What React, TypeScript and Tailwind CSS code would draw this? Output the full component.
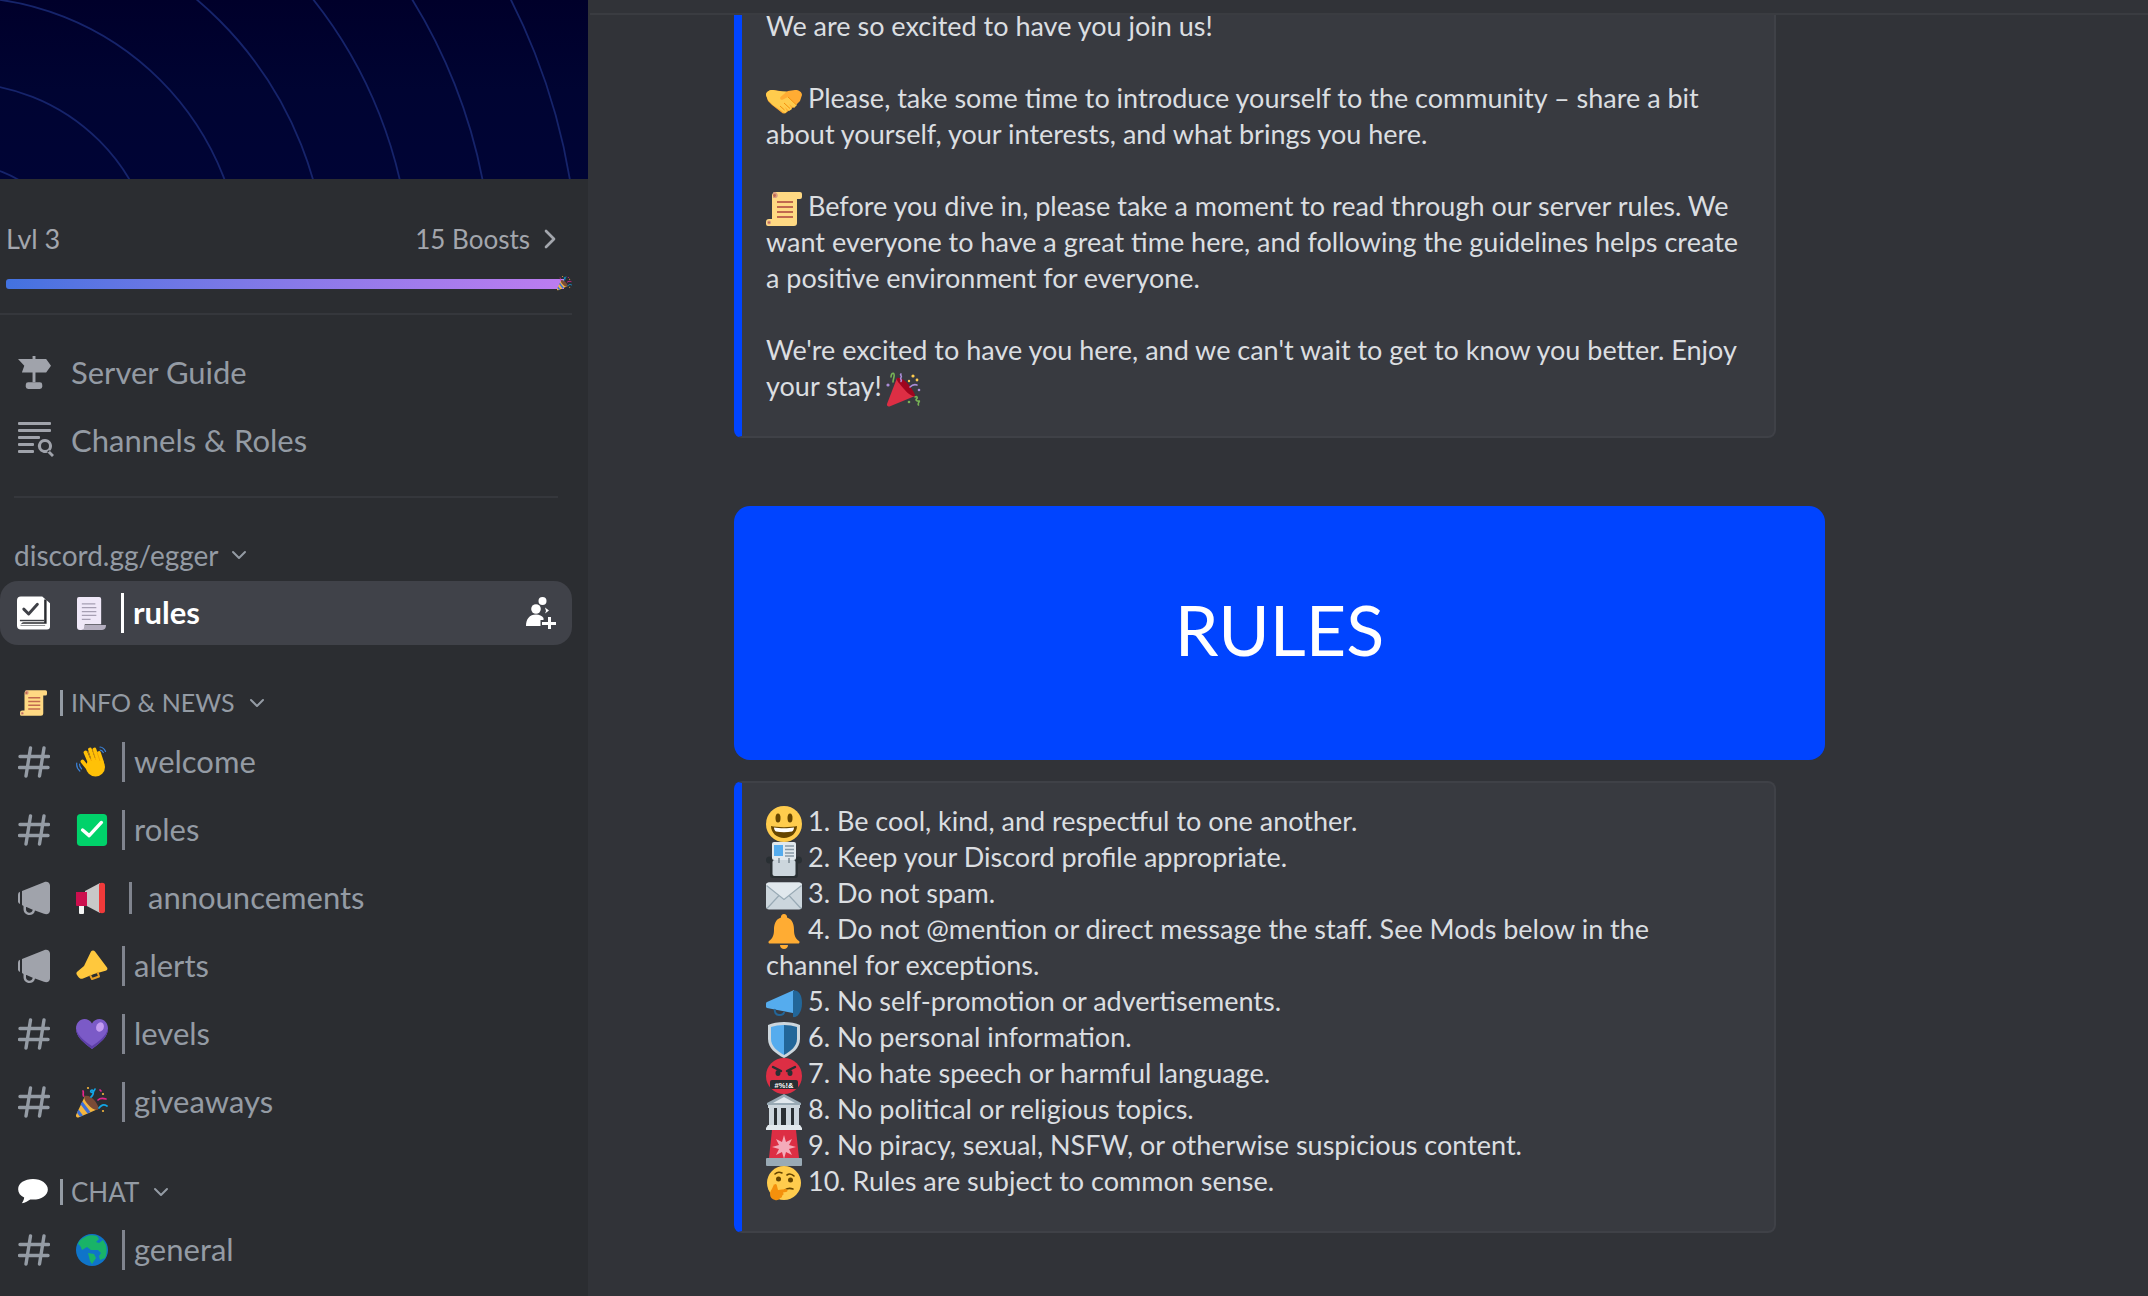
import React from "react";
import { ChevronDown, ChevronRight } from "lucide-react";

type IconProps = { className?: string };

// ---- sidebar glyphs ----
const HashIcon = ({ className }: IconProps) => (
  <svg viewBox="0 0 32 32" className={className} fill="none" stroke="#949ba4" strokeWidth="3.4" strokeLinecap="round">
    <path d="M12.5 2 8 30M26 2l-4.500 28M2 10.500h28.500M1.500 21.500H30" />
  </svg>
);

const AnnounceIcon = ({ className }: IconProps) => (
  <svg viewBox="0 0 32 34" className={className} fill="#a0a3ab">
    <path d="M0 13.500a3 3 0 0 1 2-2.800V23a3 3 0 0 1-2-2.800z" />
    <path d="M4 10 26 1.200C29 0 32 1.500 32 4.500v25c0 3-3 4.500-6 3.300l-9-3.400c-.5 3-3 4.600-5.500 4.600-3.500 0-6-2.500-6-6V25L4 24zM8 26v2.500c0 2 1.500 3.200 3.400 3.200 1.700 0 3-1 3.300-3L8.500 26z" fillRule="evenodd" />
  </svg>
);

const SignIcon = ({ className }: IconProps) => (
  <svg viewBox="0 0 34 34" className={className} fill="#a0a3ab">
    <path d="M15 0h3v3h11l5 7-5 7H18v10h-3V17H4l2.500-7L0 3h15z" />
    <rect x="8" y="27" width="17" height="7" rx="2.500" />
  </svg>
);

const ListSearchIcon = ({ className }: IconProps) => (
  <svg viewBox="0 0 36 36" className={className} fill="#a0a3ab">
    <rect x="0" y="0" width="33" height="3" rx="1" />
    <rect x="0" y="7" width="33" height="3" rx="1" />
    <rect x="0" y="14" width="22" height="3" rx="1" />
    <rect x="0" y="21" width="16" height="3" rx="1" />
    <rect x="0" y="28" width="16" height="3" rx="1" />
    <path d="M27 17a7 7 0 1 1-4.200 12.600l-.2-.1A7 7 0 0 1 27 17zm0 3a4 4 0 1 0 0 8 4 4 0 0 0 0-8zM31 28l5 5-2 2-5-5z" fillRule="evenodd" />
  </svg>
);

const RulesBookIcon = ({ className }: IconProps) => (
  <svg viewBox="0 0 34 34" className={className}>
    <path fill="#fff" d="M4 0h22l8 7v24a3 3 0 0 1-3 3H4a4 4 0 0 1-4-4V4a4 4 0 0 1 4-4z" />
    <path fill="#2b2d31" d="M28 3h2.500v25H6a2.500 2.500 0 0 0-2.500 2h25.500v.5H4c0-2.500 1-4 3-4h21z" />
    <path fill="none" stroke="#3f4147" strokeWidth="3" strokeLinecap="round" strokeLinejoin="round" d="M7 13l5 5 9-10" />
    <path fill="#3f4147" d="M3 24h25v1.500H3z" />
  </svg>
);

const AddPeopleIcon = ({ className }: IconProps) => (
  <svg viewBox="0 0 30 32" className={className} fill="#fff">
    <circle cx="16.500" cy="4" r="4" />
    <circle cx="10" cy="12" r="4.800" />
    <path d="M19 10.500l4 3-4 3a6 6 0 0 0 0-6z" />
    <path d="M0 29c0-7 3.500-11.500 10-11.500 3.500 0 6 1.300 7.500 3.500v2h-3v6H0z" />
    <path d="M22 20h3v5h5v3h-5v4h-3v-4h-6v-3h6z" />
  </svg>
);

// ---- emoji, drawn by hand since no emoji font is installed ----
const ScrollEmoji = ({ className }: IconProps) => (
  <svg viewBox="0 0 36 36" className={className}>
    <path fill="#FFD983" d="M6 5a4 4 0 0 1 4-4h24a2 2 0 0 1 2 2v3a2 2 0 0 1-2 2h-3v24a3 3 0 0 1-3 3H2a2 2 0 0 1-2-2v-2a3 3 0 0 1 3-3h3z" />
    <path fill="#D99E82" d="M7 1.500A3 3 0 0 1 10 7H7z" />
    <path fill="#C1694F" d="M11 10h16v2H11zM11 15h16v2H11zM11 20h16v2H11zM11 25h16v2H11z" />
    <circle cx="3" cy="31.500" r="2" fill="#D99E82" />
    <circle cx="8.500" cy="4.500" r="1.400" fill="#C1694F" />
    <circle cx="3" cy="31.500" r="1" fill="#C1694F" />
  </svg>
);

const HandshakeEmoji = ({ className }: IconProps) => (
  <svg viewBox="0 0 36 36" className={className}>
    <path fill="#FFAC33" d="M0 12c0-3 3-5 7-5l7 1 4 2 4-2 7-1c4 0 7 2 7 5l-2 6-4 4-9 7c-2 2-4 2-6 0l-9-7-4-4z" />
    <path fill="#FFCC4D" d="M12 8l9 .5-6 5c-2 2 0 4 2 3l5-2.500 9 8-3 3-5-4 3 5-3 2-4-4 2 4.500-2 1.500-12-8-5-5L0 12c0-3 3-5 7-5z" />
    <path fill="none" stroke="#F4900C" strokeWidth="1" d="M22 14l8 7.500M18 20l6 5.500M14 23l4.500 4" />
  </svg>
);

const PartyEmoji = ({ className }: IconProps) => (
  <svg viewBox="0 0 36 36" className={className}>
    <path fill="#DD2E44" d="M11 7 1 33c-.5 1.500 1 3 2.500 2.400L29 25z" />
    <path fill="#A0041E" d="M11 7c3-1 8 2 12 7s6.500 10 6 11c-2 1-7-2-11-7S9.500 9 11 7z" />
    <path fill="none" stroke="#AA8DD8" strokeWidth="1.600" strokeLinecap="round" d="M15 3c-1.500 1 1.500 2 0 3.500S16.500 9 15 10.500M31 14c-3-1-5 0-7 2" />
    <path fill="none" stroke="#77B255" strokeWidth="1.600" strokeLinecap="round" d="M5 6c0-3 2-5 3-3s-1 5-1 8M29 26c2-1 3 1 1.500 2s1 2.500 2.500 2-2 3-.5 4" />
    <circle cx="27" cy="5" r="1.600" fill="#FFCC4D" />
    <circle cx="31" cy="9" r="1.400" fill="#FFCC4D" />
    <circle cx="23" cy="10" r="1.200" fill="#FFCC4D" />
    <circle cx="2" cy="14" r="1.600" fill="#AA8DD8" />
    <circle cx="33" cy="19" r="1.300" fill="#AA8DD8" />
    <circle cx="23" cy="31" r="1.300" fill="#77B255" />
  </svg>
);

const PopperEmoji = ({ className }: IconProps) => (
  <svg viewBox="0 0 32 32" className={className}>
    <path fill="#F4B63F" d="M9 10 0 29c-.5 1.500 1 3 2.500 2.500L22 23z" />
    <path fill="#3B6FD8" d="M6.500 15.500 14.500 26l-3 1.500-7-9.200zM2.500 23.500l4.500 6-3 1.300-3-4z" />
    <path fill="#7A4B36" d="M9 10c2.500-1 7 1 10 5s4.500 7.500 3 8.500c-2 1.500-6.500-1-10-5S7.500 12 9 10z" />
    <path fill="none" stroke="#E5258C" strokeWidth="1.700" strokeLinecap="round" d="M7 5c1 1.500-.5 2.500.5 5M22 14c2-2 5-2 8-1M24 4l1 1" />
    <path fill="none" stroke="#12A5E6" strokeWidth="1.700" strokeLinecap="round" d="M19 3c-1 3-3 4-4 3s1-3 2-1-.5 5-2 6M23 22c2-3 5-4 8-2" />
    <circle cx="12" cy="2" r="1.100" fill="#F4B63F" />
    <circle cx="27" cy="8" r="1.100" fill="#F4B63F" />
    <circle cx="27" cy="25" r="1.100" fill="#F4B63F" />
  </svg>
);

const WaveEmoji = ({ className }: IconProps) => (
  <svg viewBox="0 0 32 32" className={className}>
    <circle cx="19.500" cy="21" r="9.500" fill="#FFC107" />
    <path fill="none" stroke="#FFC107" strokeWidth="3.800" strokeLinecap="round" d="M12.500 23 6.500 15.500M13.500 16 9.500 6.500M17.500 14 14 3.500M22 14l-3.500-10.500M26 16 23 7" />
    <path fill="none" stroke="#F29F05" strokeWidth=".8" d="M15.500 15 11.800 5M19.800 14 16.500 3.500M24 15l-3-9" />
    <path fill="none" stroke="#3B82D8" strokeWidth="1.200" strokeLinecap="round" d="M.8 17c-.5 3 .8 6 3 8M3.500 18c0 2 .5 3.500 2 4.800M24 1c2.500.2 4.500 2 5.500 4.500M24 4c1.500.2 2.500 1 3.300 2.500" />
  </svg>
);

const CheckEmoji = ({ className }: IconProps) => (
  <svg viewBox="0 0 32 34" className={className}>
    <rect x="0" y="0" width="32" height="34" rx="4" fill="#00D26A" />
    <path fill="none" stroke="#fff" strokeWidth="3.600" strokeLinecap="round" strokeLinejoin="round" d="M6 17l7 6 13-14" />
  </svg>
);

const RedMegaphoneEmoji = ({ className }: IconProps) => (
  <svg viewBox="0 0 32 32" className={className}>
    <path fill="#C8C8C8" d="M9 9 24 1v30L9 23z" />
    <path fill="#CC0F4E" d="M0 10h11v14H1a1 1 0 0 1-1-1z" />
    <path fill="#F4F4F4" d="M3 24h5v7a1 1 0 0 1-1 1H4a1 1 0 0 1-1-1z" />
    <path fill="#F03A3A" d="M23 3c0-3 6-3 6 0v26c0 3-6 3-6 0z" />
  </svg>
);

const HornEmoji = ({ className }: IconProps) => (
  <svg viewBox="0 0 32 32" className={className}>
    <path fill="#FFC83D" d="M15 1.500c1-1.500 3-1.500 4 0l12 16c1 1.500 0 3-1.500 3.200L18 24 7 28.500c-2 1-3.500-.3-5-2s-2.300-3.500-.8-4.800L8 16z" />
    <path fill="none" stroke="#E8A025" strokeWidth="2" strokeLinejoin="round" d="M14 25l2 4 7-2.500-1.500-4.500" />
  </svg>
);

const HeartEmoji = ({ className }: IconProps) => (
  <svg viewBox="0 0 32 32" className={className}>
    <path fill="#7B5AC7" d="M16 31C8 25 0 19 0 10.500 0 5 4 1 8.500 1c3 0 6 1.500 7.500 4.500C17.500 2.500 20.500 1 23.500 1 28 1 32 5 32 10.500 32 19 24 25 16 31z" />
    <path fill="#5D3FA6" d="M16 31C8 25 0 19 0 10.500c2 8 9 13 16 17.500 7-4.500 14-9.500 16-17.500C32 19 24 25 16 31z" />
    <ellipse cx="24" cy="9" rx="3.800" ry="4.800" fill="#C39BF0" transform="rotate(20 24 9)" />
  </svg>
);

const GlobeEmoji = ({ className }: IconProps) => (
  <svg viewBox="0 0 32 32" className={className}>
    <circle cx="16" cy="16" r="16" fill="#0F74C9" />
    <path fill="#19B368" d="M10 2.500c3-1.500 8-1.500 11-.5l2 3-3 3 3 1 4-3 3 5c1 4 1 9-1 13l-5 2-1-4 2-3-3-3-7 0-4-3-5 3c-1-3-2-5-4-6 1-3 3-5 8-7.500z" />
    <path fill="#19B368" d="M12 19l6 1 2 4-4 6-2-3z" />
  </svg>
);

const SpeechEmoji = ({ className }: IconProps) => (
  <svg viewBox="0 0 32 28" className={className}>
    <path fill="#fff" d="M16 0C7 0 0 4.500 0 11c0 4 2.500 7 6.500 9-.2 2-1 4-2.500 6 3.500-.5 7-2.500 9-4 1 .2 2 .2 3 .2 9 0 16-5 16-11S25 0 16 0z" />
  </svg>
);

const PaperEmoji = ({ className }: IconProps) => (
  <svg viewBox="0 0 30 34" className={className}>
    <path fill="#EFE8F8" d="M2 0h21a2 2 0 0 1 2 2v26H8v3a3 3 0 0 1-3 3H3a3 3 0 0 1-3-3V2a2 2 0 0 1 2-2z" />
    <path fill="#B4AEBF" d="M4 34c3 0 4-2 4-5h22c0 3-1 5-4 5z" />
    <path stroke="#A69FB3" strokeWidth="1.300" d="M5 7h14M5 11h15M5 15h15M5 19h15M5 23h9" />
  </svg>
);

const SmileEmoji = ({ className }: IconProps) => (
  <svg viewBox="0 0 36 36" className={className}>
    <circle cx="18" cy="18" r="18" fill="#FFCC4D" />
    <ellipse cx="12" cy="12" rx="2.500" ry="4.500" fill="#664500" />
    <ellipse cx="24" cy="12" rx="2.500" ry="4.500" fill="#664500" />
    <path fill="#664500" d="M5 20c5 1.500 21 1.500 26 0 0 7-6 12-13 12S5 27 5 20z" />
    <path fill="#fff" d="M8 21.500c5 1 15 1 20 0 0 2-1 3.500-2 4-5 1-11 1-16 0-1-.5-2-2-2-4z" />
  </svg>
);

const BadgeEmoji = ({ className }: IconProps) => (
  <svg viewBox="0 0 36 36" className={className}>
    <circle cx="3.500" cy="18" r="3.500" fill="#292F33" />
    <circle cx="32.500" cy="18" r="3.500" fill="#292F33" />
    <rect x="4" y="16" width="28" height="20" rx="3" fill="#292F33" />
    <rect x="6.500" y="18" width="23" height="16" rx="2" fill="#CCD6DD" />
    <rect x="6" y="0" width="24" height="18" rx="2" fill="#E1E8ED" />
    <rect x="8" y="3" width="9" height="11" fill="#55ACEE" />
    <path stroke="#8899A6" strokeWidth="1.300" d="M19 4h9M19 7.500h9M19 11h9M19 14h9" />
    <path stroke="#66757F" strokeWidth="1.200" d="M13 16v5M23 16v5" />
  </svg>
);

const MailEmoji = ({ className }: IconProps) => (
  <svg viewBox="0 0 36 27" className={className}>
    <rect width="36" height="27" rx="3" fill="#CCD6DD" />
    <path fill="#E1E8ED" d="M3 0h30a3 3 0 0 1 3 3L18 17 0 3a3 3 0 0 1 3-3z" />
    <path fill="none" stroke="#99AAB5" strokeWidth="1.200" d="M.5 3 18 17 35.500 3M1 26l12-13M35 26 23 13" />
  </svg>
);

const BellEmoji = ({ className }: IconProps) => (
  <svg viewBox="0 0 36 36" className={className}>
    <path fill="#FFAC33" d="M18 0a3 3 0 0 1 3 3.500C27 5.500 28 11 28 16c0 6 2 9 5 11 1 1 .5 2.500-1 2.500H4c-1.500 0-2-1.500-1-2.500 3-2 5-5 5-11 0-5 1-10.500 7-12.500A3 3 0 0 1 18 0z" />
    <path fill="#FFAC33" d="M14 31h8c0 2.500-2 4-4 4s-4-1.500-4-4z" />
  </svg>
);

const BlueHornEmoji = ({ className }: IconProps) => (
  <svg viewBox="0 0 36 30" className={className}>
    <path fill="#55ACEE" d="M1 13 28 1l4 24-31-6a2 2 0 0 1-1-1.500v-3A2 2 0 0 1 1 13z" />
    <path fill="#226699" d="M27 2c3-2 9 1 9 12s-6 15-9 14z" />
    <path fill="none" stroke="#226699" strokeWidth="2" d="M9 20c-1 3 1 6 4 6s5-1 5-3" />
  </svg>
);

const ShieldEmoji = ({ className }: IconProps) => (
  <svg viewBox="0 0 36 36" className={className}>
    <path fill="#CCD6DD" d="M18 0c6 0 12 1 16 3v14c0 9-8 15-16 19C10 32 2 26 2 17V3c4-2 10-3 16-3z" />
    <path fill="#55ACEE" d="M18 3c-5 0-9 .8-13 2v12c0 7 6 12 13 16z" />
    <path fill="#226699" d="M18 3c5 0 9 .8 13 2v12c0 7-6 12-13 16z" />
  </svg>
);

const CursingEmoji = ({ className }: IconProps) => (
  <svg viewBox="0 0 36 36" className={className}>
    <circle cx="18" cy="18" r="18" fill="#DD2E44" />
    <path fill="none" stroke="#292F33" strokeWidth="2.400" strokeLinecap="round" d="M7 9l8 4M29 9l-8 4" />
    <ellipse cx="12" cy="15" rx="2.500" ry="3" fill="#292F33" />
    <ellipse cx="24" cy="15" rx="2.500" ry="3" fill="#292F33" />
    <rect x="4" y="22" width="28" height="9" rx="2" fill="#292F33" />
    <text x="18" y="29.500" textAnchor="middle" fill="#fff" fontSize="7.500" fontWeight="700" fontFamily="Liberation Sans, sans-serif">#%!&amp;</text>
  </svg>
);

const BankEmoji = ({ className }: IconProps) => (
  <svg viewBox="0 0 36 36" className={className}>
    <path fill="#99AAB5" d="M18 0 35 9v2H1V9z" />
    <path fill="#E1E8ED" d="M18 3 29 9H7z" />
    <rect x="2" y="11" width="32" height="3" fill="#CCD6DD" />
    <rect x="3" y="14" width="30" height="17" fill="#292F33" />
    <path fill="#CCD6DD" d="M3 14h5v17H3zM11 14h4v17h-4zM20 14h5v17h-5zM28 14h5v17h-5z" />
    <path fill="#E1E8ED" d="M2 31h32l2 3v2H0v-2z" />
  </svg>
);

const SirenEmoji = ({ className }: IconProps) => (
  <svg viewBox="0 0 36 36" className={className}>
    <path fill="#DD2E44" d="M6 0h24l3 28H3z" />
    <path fill="#F4ABBA" d="m18 5 2 7 6-3-3 6 7 2-7 2 3 6-6-3-2 7-2-7-6 3 3-6-7-2 7-2-3-6 6 3z" />
    <rect y="28" width="36" height="8" rx="1" fill="#99AAB5" />
  </svg>
);

const ThinkingEmoji = ({ className }: IconProps) => (
  <svg viewBox="0 0 36 36" className={className}>
    <circle cx="18" cy="17" r="17" fill="#FFCC4D" />
    <path fill="none" stroke="#664500" strokeWidth="1.600" strokeLinecap="round" d="M9 8c2-2 5-2 7-1M21 9c2-1.500 5-1 7 1M19 24c2-1.500 5-2 8-1" />
    <circle cx="12.500" cy="13" r="2.500" fill="#664500" />
    <circle cx="24.500" cy="14" r="2.500" fill="#664500" />
    <path fill="#F4900C" d="M8 19c1-2 3-1 3 1l1 4 8-1c2 0 2 3 0 3l-3 .5c1 1 .5 3-1 3 .5 1.500-1 3-2 2.500-1 2-3 2.500-5 2-3-.5-5-3-5-6 0-3 3-6 4-10z" />
  </svg>
);

const emoji = "inline-block w-9 h-9 -my-2 align-middle mr-[6px]";

type Channel = { name: string; kind: "text" | "news"; Emoji: React.FC<IconProps>; spaced?: boolean };

const infoChannels: Channel[] = [
  { name: "welcome", kind: "text", Emoji: WaveEmoji },
  { name: "roles", kind: "text", Emoji: CheckEmoji },
  { name: "announcements", kind: "news", Emoji: RedMegaphoneEmoji, spaced: true },
  { name: "alerts", kind: "news", Emoji: HornEmoji },
  { name: "levels", kind: "text", Emoji: HeartEmoji },
  { name: "giveaways", kind: "text", Emoji: PopperEmoji },
];

const ChannelRow = ({ name, kind, Emoji, spaced }: Channel) => (
  <div className="flex items-center h-[68px] pl-[18px] text-[31px] text-[#949ba4]">
    {kind === "text" ? <HashIcon className="w-8 h-8 shrink-0" /> : <AnnounceIcon className="w-8 h-[34px] shrink-0" />}
    <Emoji className="w-8 h-8 ml-[26px] shrink-0" />
    <span className={spaced ? "w-[3px] h-[32px] bg-[#80848e] ml-[21px] mr-[16px]" : "w-[3px] h-[40px] bg-[#80848e] ml-[14px] mr-[9px]"} />
    <span className="leading-none -mt-[2px]">{name}</span>
  </div>
);

const rules: { Emoji: React.FC<IconProps>; text: string }[] = [
  { Emoji: SmileEmoji, text: "1. Be cool, kind, and respectful to one another." },
  { Emoji: BadgeEmoji, text: "2. Keep your Discord profile appropriate." },
  { Emoji: MailEmoji, text: "3. Do not spam." },
  { Emoji: BellEmoji, text: "4. Do not @mention or direct message the staff. See Mods below in the" },
  { Emoji: BlueHornEmoji, text: "5. No self-promotion or advertisements." },
  { Emoji: ShieldEmoji, text: "6. No personal information." },
  { Emoji: CursingEmoji, text: "7. No hate speech or harmful language." },
  { Emoji: BankEmoji, text: "8. No political or religious topics." },
  { Emoji: SirenEmoji, text: "9. No piracy, sexual, NSFW, or otherwise suspicious content." },
  { Emoji: ThinkingEmoji, text: "10. Rules are subject to common sense." },
];

const Sidebar = () => (
  <aside className="w-[590px] h-full shrink-0 bg-[#2b2d31] overflow-hidden border-r-2 border-[#313338]">
    {/* Server banner */}
    <div className="h-[179px] bg-gradient-to-b from-[#00002a] via-[#000432] to-[#000435]">
      <svg viewBox="0 0 588 179" className="w-full h-full" fill="none" stroke="#16246b" strokeWidth="1.800">
        <circle cx="-40" cy="280" r="116" />
        <circle cx="-40" cy="280" r="197" />
        <circle cx="-40" cy="280" r="283" />
        <circle cx="-40" cy="280" r="367" />
        <circle cx="-40" cy="280" r="451" />
        <circle cx="-40" cy="280" r="532" />
        <circle cx="-40" cy="280" r="618" />
      </svg>
    </div>

    {/* Boost progress */}
    <div className="flex items-center justify-between h-8 mt-[44px] pl-[6px] pr-[22px] text-[27px] text-[#a3a6ad]">
      <span>Lvl 3</span>
      <span className="flex items-center gap-[4px] text-[26px]">
        15 Boosts <ChevronRight className="w-8 h-8" strokeWidth={2} />
      </span>
    </div>
    <div className="relative w-[572px] mt-[24px] pl-[6px]">
      <div className="h-[10px] w-[558px] rounded-l-[3px] bg-gradient-to-r from-[#4272e0] to-[#bd7cf0]" />
      <PopperEmoji className="absolute right-0 -top-[6px] w-[15px] h-[20px]" />
    </div>
    <div className="w-[572px] h-[2px] bg-[#35373c] mt-[24px]" />

    {/* Guide links */}
    <div className="mt-[23px] text-[31px] text-[#949ba4]">
      <div className="flex items-center h-[68px] pl-[18px] gap-[20px]">
        <SignIcon className="w-[33px] h-[33px]" />
        <span>Server Guide</span>
      </div>
      <div className="flex items-center h-[68px] pl-[18px] gap-[17px]">
        <ListSearchIcon className="w-[36px] h-[36px]" />
        <span>Channels &amp; Roles</span>
      </div>
    </div>
    <div className="w-[544px] h-[2px] bg-[#35373c] ml-[14px] mt-[22px]" />

    {/* Active channel */}
    <div className="flex items-center gap-[8px] h-10 pl-[14px] mt-[37px] text-[28px] text-[#949ba4]">
      discord.gg/egger <ChevronDown className="w-6 h-6" strokeWidth={2} />
    </div>
    <div className="flex items-center h-[64px] w-[572px] mt-[6px] rounded-[18px] bg-[#404249] pl-[17px] pr-[16px] text-[31px] text-white">
      <RulesBookIcon className="w-[33px] h-[34px] shrink-0" />
      <PaperEmoji className="w-[29px] h-[33px] ml-[27px] shrink-0" />
      <span className="w-[3px] h-[40px] bg-white ml-[15px] mr-[9px]" />
      <span className="font-bold leading-none -mt-[2px]">rules</span>
      <AddPeopleIcon className="w-[30px] h-[32px] ml-auto" />
    </div>

    {/* Channel categories */}
    <div className="flex items-center h-10 pl-[20px] mt-[38px] text-[25px] text-[#949ba4]">
      <ScrollEmoji className="w-[27px] h-[28px]" />
      <span className="w-[3px] h-[26px] bg-[#949ba4] ml-[13px] mr-[8px]" />
      INFO &amp; NEWS
      <ChevronDown className="w-6 h-6 ml-[10px]" strokeWidth={2} />
    </div>
    <div className="mt-[5px]">
      {infoChannels.map((c) => (
        <ChannelRow key={c.name} {...c} />
      ))}
    </div>
    <div className="flex items-center h-10 pl-[18px] mt-[36px] text-[26px] text-[#949ba4]">
      <SpeechEmoji className="w-[30px] h-[26px]" />
      <span className="w-[3px] h-[26px] bg-[#949ba4] ml-[12px] mr-[8px]" />
      CHAT
      <ChevronDown className="w-6 h-6 ml-[10px]" strokeWidth={2} />
    </div>
    <div className="mt-[4px]">
      <ChannelRow name="general" kind="text" Emoji={GlobeEmoji} />
    </div>
  </aside>
);

export default function App() {
  return (
    <div className="relative flex w-[2148px] h-[1296px] overflow-hidden bg-[#313338] font-['Lato',sans-serif]">
      <Sidebar />
      <main className="relative flex-1 pl-[144px] overflow-hidden">
        <div className="absolute inset-x-0 top-0 h-[15px] bg-[#313338] border-b-2 border-[#3a3c41] z-10" />

        {/* Welcome embed, scrolled under the top bar */}
        <div className="w-[1042px] h-[438px] rounded-b-[8px] border-2 border-l-8 border-[#3f4147] border-l-[#0044ff] bg-[#383a40] pl-[24px] pt-[6px] text-[27px] leading-[36px] text-[#dbdee1] whitespace-nowrap">
          We are so excited to have you join us!
          <br />
          <br />
          <HandshakeEmoji className={emoji} />
          Please, take some time to introduce yourself to the community – share a bit
          <br />
          about yourself, your interests, and what brings you here.
          <br />
          <br />
          <ScrollEmoji className={emoji} />
          Before you dive in, please take a moment to read through our server rules. We
          <br />
          want everyone to have a great time here, and following the guidelines helps create
          <br />a positive environment for everyone.
          <br />
          <br />
          We're excited to have you here, and we can't wait to get to know you better. Enjoy
          <br />
          your stay!
          <PartyEmoji className="inline-block w-9 h-9 -my-2 align-middle ml-[4px]" />
        </div>

        {/* Rules banner */}
        <div className="flex items-center justify-center w-[1091px] h-[254px] mt-[68px] pb-[8px] rounded-[16px] bg-[#0044ff] text-[70px] text-white">
          RULES
        </div>

        {/* Rules embed */}
        <div className="w-[1042px] h-[452px] mt-[21px] rounded-[8px] border-2 border-l-8 border-[#3f4147] border-l-[#0044ff] bg-[#383a40] pl-[24px] pt-[20px] text-[27px] leading-[36px] text-[#dbdee1] whitespace-nowrap">
          {rules.map(({ Emoji, text }) => (
            <React.Fragment key={text}>
              <Emoji className={emoji} />
              {text}
              <br />
              {text.startsWith("4.") && (
                <>
                  channel for exceptions.
                  <br />
                </>
              )}
            </React.Fragment>
          ))}
        </div>
      </main>
    </div>
  );
}
